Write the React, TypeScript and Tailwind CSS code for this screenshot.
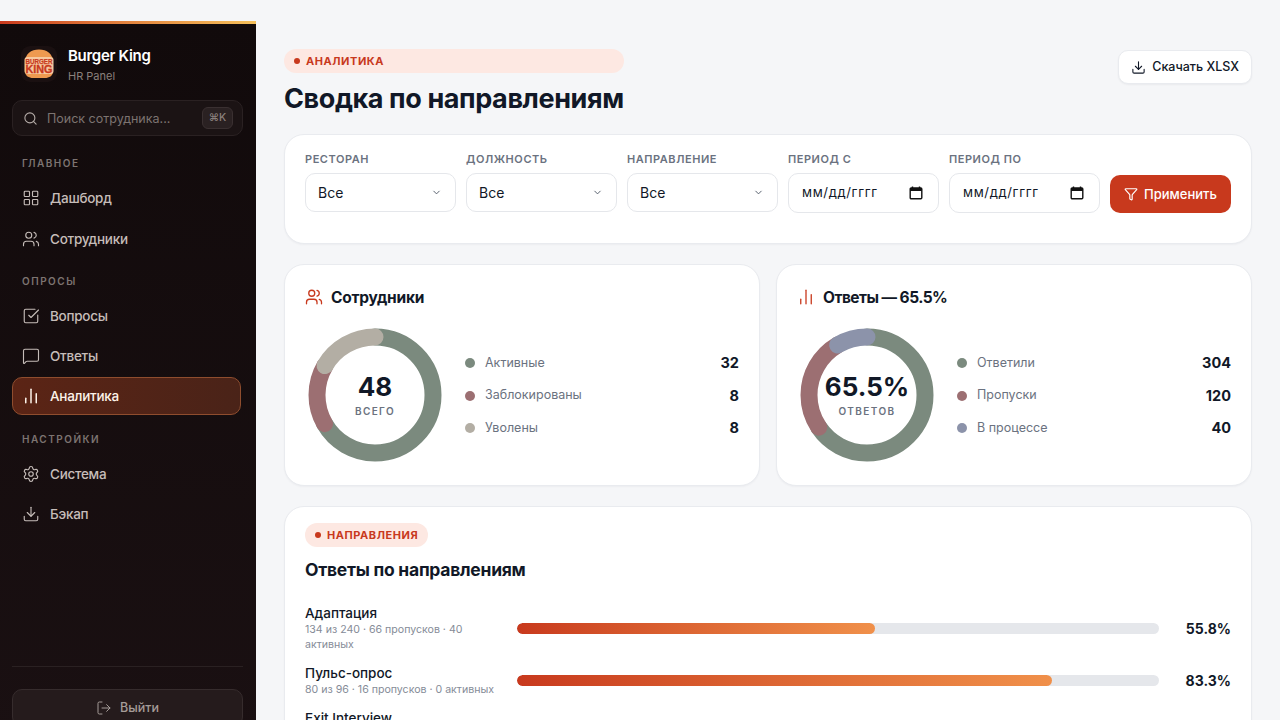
import { ChartNoAxesColumn, ChevronDown, Download, Funnel, LayoutGrid, LogOut, MessageSquare, Search, Settings, SquareCheckBig, Users } from "lucide-react"
import type { ReactNode } from "react"

function Logo() {
  return (
    <svg width="36" height="36" viewBox="0 0 36 36" className="shrink-0">
      <rect width="36" height="36" rx="9" fill="#1a1011" />
      <path d="M4 16C4 8 10 3.5 18 3.5S32 8 32 16z" fill="#ee9a50" />
      <path d="M4 25h28c0 5-4 7-8 7H12c-4 0-8-2-8-7z" fill="#ee9a50" />
      <rect x="3.5" y="11" width="29" height="17" rx="3" fill="#f7c9a0" />
      <text x="18" y="18" textAnchor="middle" fontSize="7.5" fontWeight="700" fill="#c8391d" stroke="#c8391d" strokeWidth="0.25" fontFamily="Liberation Sans, sans-serif" textLength="27" lengthAdjust="spacingAndGlyphs">BURGER</text>
      <text x="18" y="27" textAnchor="middle" fontSize="10" fontWeight="700" fill="#c8391d" stroke="#c8391d" strokeWidth="0.3" fontFamily="Liberation Sans, sans-serif" textLength="27" lengthAdjust="spacingAndGlyphs">KING</text>
    </svg>
  )
}

function NavItem({ icon, label, active }: { icon: ReactNode; label: string; active?: boolean }) {
  return (
    <div
      className={`flex h-[38px] items-center gap-[10px] rounded-[10px] border px-[9px] text-[13.5px] font-medium tracking-[-0.02em] ${
        active
          ? "w-[229px] border-[#8f4d2e] bg-gradient-to-r from-[#5b2415] to-[#4a2318] text-[#fdf3ea]"
          : "border-transparent text-[#c6bdb9]"
      }`}
    >
      {icon}
      <span className="-translate-y-[0.5px]">{label}</span>
    </div>
  )
}

function SectionLabel({ children }: { children: ReactNode }) {
  return <p className="px-[10px] text-[10px] font-semibold leading-[12px] tracking-[0.15em] text-[#7d7471]">{children}</p>
}

function Sidebar() {
  return (
    <aside className="mt-[21px] flex h-[720px] w-[256px] shrink-0 flex-col bg-gradient-to-b from-[#110a0b] to-[#1a1012]">
      <div className="h-[3px] bg-gradient-to-r from-[#c8391d] via-[#e2843f] to-[#f5c05b]" />
      <div className="flex h-[76px] items-center gap-[11px] pl-[21px] pt-[4px]">
        <Logo />
        <div>
          <p className="text-[15px] font-semibold leading-[20px] tracking-[-0.02em] text-white">Burger King</p>
          <p className="mt-[3px] text-[11px] leading-[14px] text-[#8a807c]">HR Panel</p>
        </div>
      </div>
      <div className="ml-[12px] mr-[13px] flex h-[36px] items-center gap-[9px] rounded-[10px] border border-[#2a2122] bg-[#1b1314] pl-[10px] pr-[9px]">
        <Search size={15} strokeWidth={1.75} className="text-[#b5aca8]" />
        <span className="flex-1 translate-y-[0.5px] text-[12.5px] text-[#7d7471]">Поиск сотрудника...</span>
        <span className="flex h-[22px] w-[31px] items-center justify-center rounded-[6px] border border-[#3a3031] bg-[#2a2122] text-[10.5px] font-medium text-[#8a807c]">⌘K</span>
      </div>
      <nav className="flex flex-1 flex-col px-[12px] pt-[21px]">
        <SectionLabel>ГЛАВНОЕ</SectionLabel>
        <div className="mt-[10px] flex flex-col gap-[3px]">
          <NavItem icon={<LayoutGrid size={18} strokeWidth={1.5} />} label="Дашборд" />
          <NavItem icon={<Users size={18} strokeWidth={1.5} />} label="Сотрудники" />
        </div>
        <div className="mt-[17px]">
          <SectionLabel>ОПРОСЫ</SectionLabel>
        </div>
        <div className="mt-[10px] flex flex-col gap-[2px]">
          <NavItem icon={<SquareCheckBig size={18} strokeWidth={1.5} />} label="Вопросы" />
          <NavItem icon={<MessageSquare size={18} strokeWidth={1.5} />} label="Ответы" />
          <NavItem icon={<ChartNoAxesColumn size={18} strokeWidth={2} />} label="Аналитика" active />
        </div>
        <div className="mt-[18px]">
          <SectionLabel>НАСТРОЙКИ</SectionLabel>
        </div>
        <div className="mt-[10px] flex flex-col gap-[2px]">
          <NavItem icon={<Settings size={18} strokeWidth={1.5} />} label="Система" />
          <NavItem icon={<Download size={18} strokeWidth={1.5} />} label="Бэкап" />
        </div>
      </nav>
      <div className="mb-[14px] ml-[12px] mr-[13px] border-t border-[#2a2122] pt-[22px]">
        <div className="flex h-[38px] items-center justify-center gap-[8px] rounded-[10px] border border-[#362c2d] bg-[#251b1c] text-[12.5px] font-medium text-[#a59c98]">
          <LogOut size={16} strokeWidth={1.5} />
          Выйти
        </div>
      </div>
    </aside>
  )
}

function Pill({ children, className }: { children: ReactNode; className?: string }) {
  return (
    <div className={`flex h-[24px] items-center gap-[6px] rounded-full bg-[#fde8e2] px-[10px] text-[11px] font-bold tracking-[0.05em] text-[#c8391d] ${className ?? ""}`}>
      <span className="size-[6px] rounded-full bg-[#c8391d]" />
      {children}
    </div>
  )
}

function Field({ label, children }: { label: string; children: ReactNode }) {
  return (
    <div className="flex-1">
      <p className="mb-[7px] text-[11px] font-semibold leading-[14px] tracking-[0.05em] text-[#6b7280]">{label}</p>
      {children}
    </div>
  )
}

function SelectBox() {
  return (
    <div className="mt-[1px] flex h-[39px] items-center justify-between rounded-[10px] border border-[#e5e7eb] bg-white pl-[12px] pr-[13px] text-[14px] text-[#111827]">
      Все
      <ChevronDown size={11} strokeWidth={2} className="text-[#4b5563]" />
    </div>
  )
}

function DateBox() {
  return (
    <div className="flex h-[40px] items-center justify-between rounded-[10px] border border-[#e5e7eb] bg-white pl-[13px] pr-[15px] text-[13px] tracking-[0.05em] text-[#111827]">
      мм/дд/гггг
      <svg width="14" height="14" viewBox="0 0 14 14" fill="none">
        <path d="M3.5 0.5v2M10.5 0.5v2" stroke="#111" strokeWidth="1.4" />
        <rect x="1.2" y="2" width="11.6" height="10.8" rx="1" stroke="#111" strokeWidth="1.4" />
        <rect x="1" y="2" width="12" height="3" fill="#111" />
      </svg>
    </div>
  )
}

function Donut({ segments }: { segments: { value: number; color: string }[] }) {
  const r = 58
  const c = 2 * Math.PI * r
  const total = segments.reduce((s, x) => s + x.value, 0)
  let offset = 0
  return (
    <svg width="134" height="134" viewBox="0 0 134 134" className="-rotate-90">
      {segments.map((seg, i) => {
        const len = (seg.value / total) * c
        const el = (
          <circle
            key={i}
            cx="67"
            cy="67"
            r={r}
            fill="none"
            stroke={seg.color}
            strokeWidth="17"
            strokeLinecap="round"
            strokeDasharray={`${len} ${c - len}`}
            strokeDashoffset={-offset}
          />
        )
        offset += len
        return el
      })}
    </svg>
  )
}

type StatRow = { label: string; value: number; color: string }

function StatCard({ icon, title, titleClass, center, sub, rows }: { icon: ReactNode; title: string; titleClass: string; center: string; sub: string; rows: StatRow[] }) {
  return (
    <div className="h-[222px] flex-1 rounded-[20px] border border-[#e9ebef] bg-white px-[20px] pt-[20px] shadow-[0_1px_2px_rgba(17,24,39,0.04)]">
      <div className={`flex h-[24px] items-center gap-[8px] text-[15.5px] font-bold text-[#111827] ${titleClass}`}>
        {icon}
        <span className="translate-y-[0.5px]">{title}</span>
      </div>
      <div className="mt-[19px] flex items-center gap-[20px] pl-[3px]">
        <div className="relative size-[134px] shrink-0">
          <Donut segments={rows} />
          <div className="absolute inset-0 flex flex-col items-center justify-center">
            <span className="text-[26px] font-bold leading-[32px] text-[#111827]">{center}</span>
            <span className="mt-[1px] text-[10px] font-semibold tracking-[0.14em] text-[#6b7280]">{sub}</span>
          </div>
        </div>
        <div className="flex flex-1 flex-col gap-[12.5px] pl-[3px] pt-[1px]">
          {rows.map((row) => (
            <div key={row.label} className="flex h-[20px] items-center text-[12.5px] text-[#6b7280]">
              <span className="mr-[10px] size-[10px] rounded-full" style={{ background: row.color }} />
              <span className="flex-1">{row.label}</span>
              <span className="text-[14.5px] font-bold text-[#111827]">{row.value}</span>
            </div>
          ))}
        </div>
      </div>
    </div>
  )
}

function DirectionRow({ name, sub, pct, width }: { name: string; sub: string; pct: string; width: number }) {
  return (
    <div className="flex items-center gap-[20px]">
      <div className="w-[192px] shrink-0">
        <p className="text-[13.5px] font-medium leading-[18px] text-[#111827]">{name}</p>
        <p className="text-[10.6px] leading-[15px] text-[#858b97]">{sub}</p>
      </div>
      <div className="h-[11px] flex-1 overflow-hidden rounded-full bg-[#e5e7eb]">
        <div className="h-full rounded-full bg-gradient-to-r from-[#c8391d] to-[#f0904a]" style={{ width: `${width}%` }} />
      </div>
      <p className="w-[52px] shrink-0 text-right text-[14px] font-bold text-[#111827]">{pct}</p>
    </div>
  )
}

export default function App() {
  const staff = [
    { label: "Активные", value: 32, color: "#7b8a7e" },
    { label: "Заблокированы", value: 8, color: "#9c6f72" },
    { label: "Уволены", value: 8, color: "#b3aea4" },
  ]
  const answers = [
    { label: "Ответили", value: 304, color: "#7b8a7e" },
    { label: "Пропуски", value: 120, color: "#9c6f72" },
    { label: "В процессе", value: 40, color: "#8c93aa" },
  ]

  return (
    <div className="flex h-screen overflow-hidden bg-[#f5f6f8] font-['Inter',sans-serif]">
      <Sidebar />
      <main className="min-w-0 flex-1 px-[28px] pt-[49px]">
        <div className="flex items-start justify-between">
          <div>
            <Pill>АНАЛИТИКА</Pill>
            <h1 className="mt-[8px] text-[27px] font-bold leading-[36px] tracking-[-0.015em] text-[#111827]">Сводка по направлениям</h1>
          </div>
          <div className="mt-[1px] flex h-[34px] items-center gap-[6px] rounded-[10px] border border-[#e9ebef] bg-white px-[12px] text-[12.5px] font-medium text-[#111827] shadow-[0_1px_2px_rgba(17,24,39,0.05)]">
            <Download size={15} strokeWidth={1.75} />
            Скачать XLSX
          </div>
        </div>

        <div className="mt-[17px] flex h-[110px] items-start gap-[10px] rounded-[20px] border border-[#e9ebef] bg-white px-[20px] pt-[17px] shadow-[0_1px_2px_rgba(17,24,39,0.04)]">
          <Field label="РЕСТОРАН"><SelectBox /></Field>
          <Field label="ДОЛЖНОСТЬ"><SelectBox /></Field>
          <Field label="НАПРАВЛЕНИЕ"><SelectBox /></Field>
          <Field label="ПЕРИОД С"><DateBox /></Field>
          <Field label="ПЕРИОД ПО"><DateBox /></Field>
          <div className="mt-[23px] flex h-[38px] w-[121px] shrink-0 items-center justify-center gap-[6px] rounded-[10px] bg-[#c8391d] text-[13px] font-medium text-white">
            <Funnel size={14} strokeWidth={2} />
            <span className="translate-y-[0.5px]">Применить</span>
          </div>
        </div>

        <div className="mt-[20px] flex gap-[16px]">
          <StatCard
            icon={<Users size={18} strokeWidth={1.75} className="text-[#c8391d]" />}
            title="Сотрудники"
            titleClass="tracking-[-0.015em]"
            center="48"
            sub="ВСЕГО"
            rows={staff}
          />
          <StatCard
            icon={<ChartNoAxesColumn size={18} strokeWidth={1.75} className="text-[#c8391d]" />}
            title="Ответы — 65.5%"
            titleClass="tracking-[-0.035em]"
            center="65.5%"
            sub="ОТВЕТОВ"
            rows={answers}
          />
        </div>

        <div className="mt-[20px] rounded-[20px] border border-[#e9ebef] bg-white px-[20px] pb-[20px] pt-[16px] shadow-[0_1px_2px_rgba(17,24,39,0.04)]">
          <Pill className="w-fit">НАПРАВЛЕНИЯ</Pill>
          <h2 className="mt-[10px] text-[17.5px] font-bold leading-[26px] tracking-[-0.015em] text-[#111827]">Ответы по направлениям</h2>
          <div className="mt-[21px] flex flex-col gap-[12px]">
            <DirectionRow name="Адаптация" sub="134 из 240 · 66 пропусков · 40 активных" pct="55.8%" width={55.8} />
            <DirectionRow name="Пульс-опрос" sub="80 из 96 · 16 пропусков · 0 активных" pct="83.3%" width={83.3} />
            <DirectionRow name="Exit Interview" sub="20 из 128 · 38 пропусков · 0 активных" pct="15.6%" width={15.6} />
          </div>
        </div>
      </main>
    </div>
  )
}
